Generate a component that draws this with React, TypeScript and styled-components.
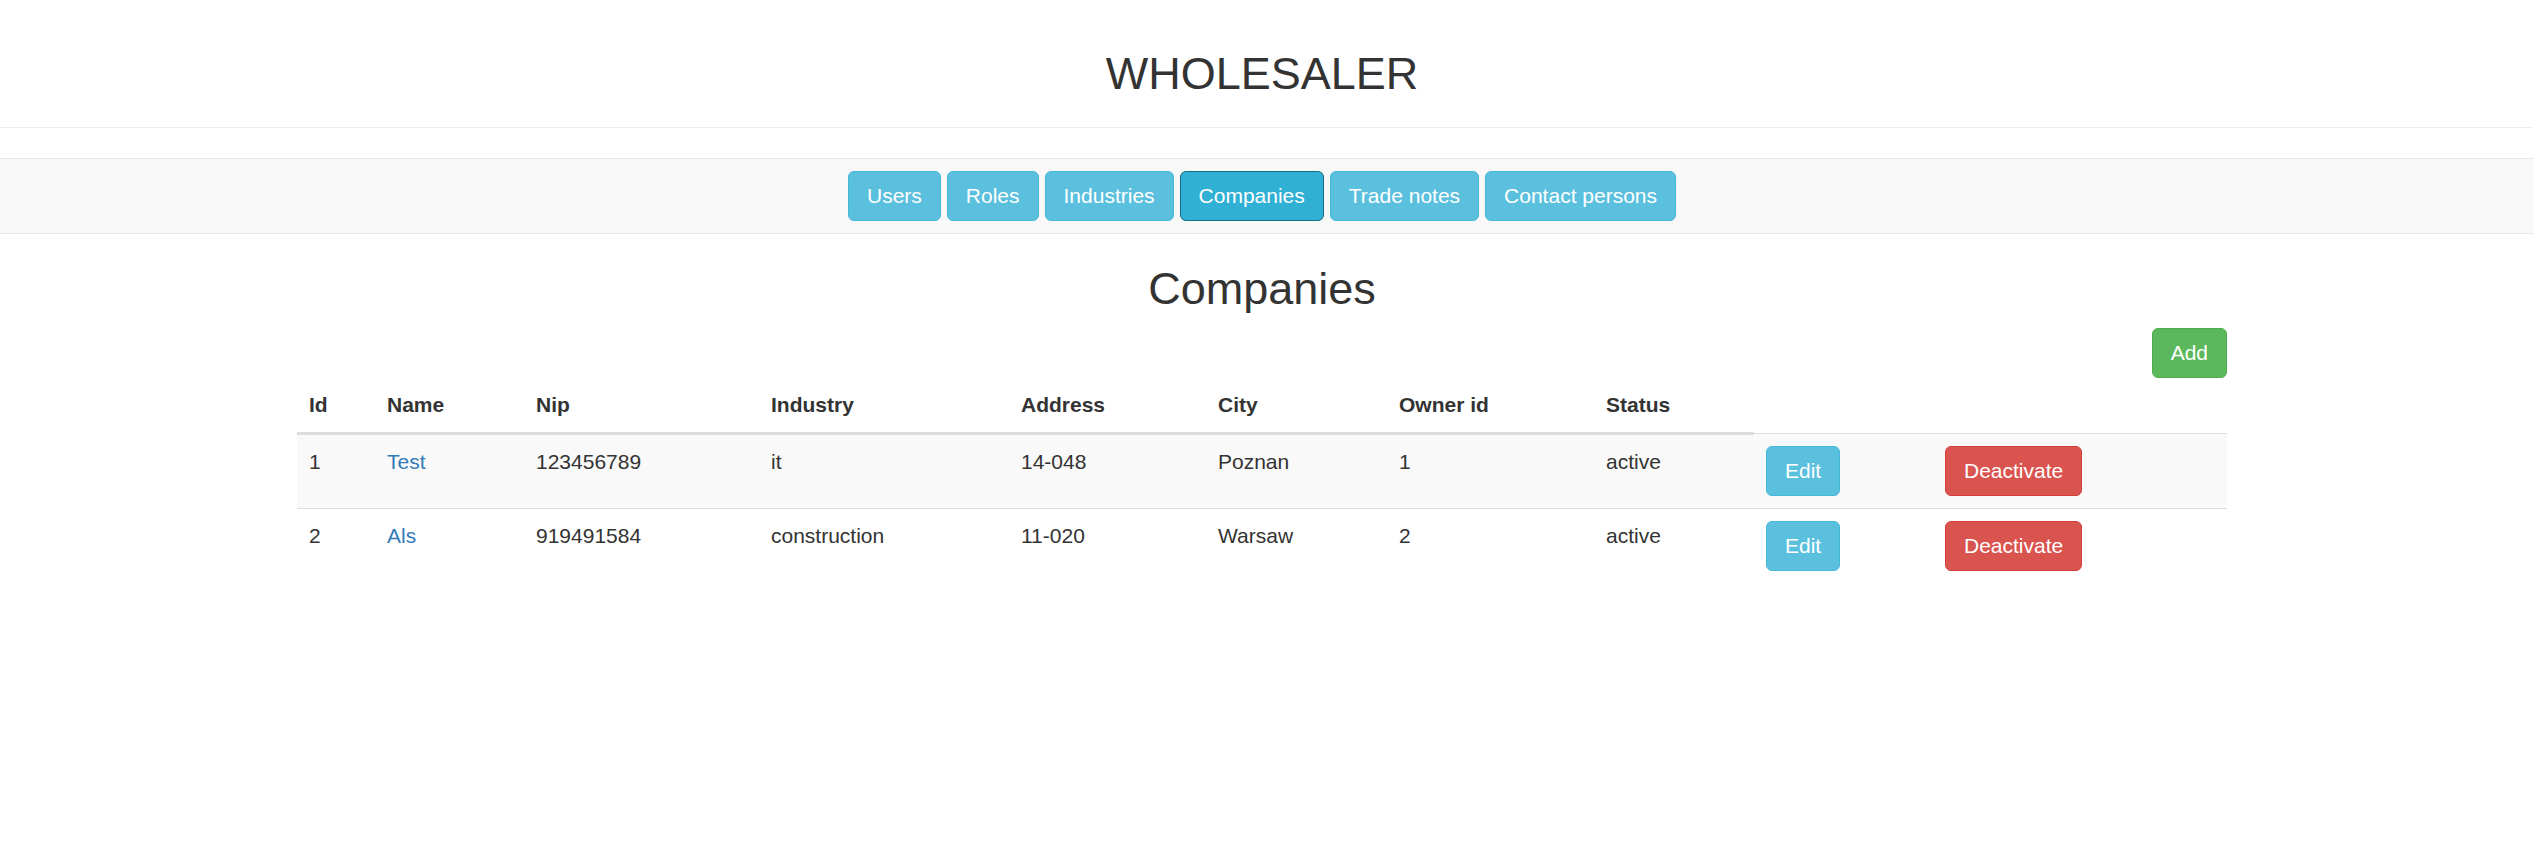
import React from "react";
import styled, { createGlobalStyle } from "styled-components";

const GlobalStyle = createGlobalStyle`
  html, body {
    margin: 0;
    padding: 0;
    background: #ffffff;
  }
  body {
    font-family: "Liberation Sans", Arial, Helvetica, sans-serif;
    font-size: 21px;
    line-height: 30px;
    color: #333333;
  }
  *, *::before, *::after {
    box-sizing: border-box;
  }
`;

const Header = styled.header`
  padding: 49px 9px 28px 0;
  border-bottom: 1px solid #eeeeee;
  text-align: center;
`;

const Title = styled.h1`
  margin: 0;
  font-size: 45px;
  line-height: 49.5px;
  font-weight: 400;
  color: #333333;
`;

const Navbar = styled.nav`
  margin-top: 30px;
  background: #f8f8f8;
  border-top: 1px solid #e7e7e7;
  border-bottom: 1px solid #e7e7e7;
  padding: 12px 9px 12px 0;
  display: flex;
  justify-content: center;
  gap: 6px;
`;

type Variant = "info" | "infoActive" | "danger" | "success";

const variants: Record<Variant, { bg: string; border: string }> = {
  info: { bg: "#5bc0de", border: "#46b8da" },
  infoActive: { bg: "#31b0d5", border: "#1b6d85" },
  danger: { bg: "#d9534f", border: "#d43f3a" },
  success: { bg: "#5cb85c", border: "#4cae4c" },
};

const Button = styled.button<{ $variant: Variant }>`
  display: inline-block;
  margin: 0;
  padding: 9px 18px;
  font-family: inherit;
  font-size: 21px;
  line-height: 30px;
  font-weight: 400;
  color: #ffffff;
  white-space: nowrap;
  border-radius: 6px;
  border: 1px solid ${(p) => variants[p.$variant].border};
  background: ${(p) => variants[p.$variant].bg};
  cursor: pointer;
`;

const Content = styled.div`
  padding-right: 9px;
`;

const Main = styled.main`
  width: 1930px;
  margin: 0 auto;
`;

const SectionTitle = styled.h2`
  margin: 30px 0 15px;
  font-size: 45px;
  line-height: 49.5px;
  font-weight: 400;
  text-align: center;
  color: #333333;
`;

const Toolbar = styled.div`
  display: flex;
  justify-content: flex-end;
`;

const Table = styled.table`
  width: 100%;
  border-collapse: collapse;
  border-spacing: 0;
  table-layout: fixed;
`;

const Th = styled.th`
  text-align: left;
  font-weight: 700;
  padding: 12px;
  line-height: 30px;
  vertical-align: bottom;
  border-bottom: 3px solid #dddddd;
`;

const Row = styled.tr<{ $striped: boolean }>`
  background: ${(p) => (p.$striped ? "#f9f9f9" : "transparent")};
`;

const Td = styled.td`
  padding: 12px;
  line-height: 30px;
  vertical-align: top;
  border-top: 1px solid #dddddd;
`;

const NameLink = styled.a`
  color: #337ab7;
  text-decoration: none;
`;

const navItems = ["Users", "Roles", "Industries", "Companies", "Trade notes", "Contact persons"];

const columns = [
  { label: "Id", width: 78 },
  { label: "Name", width: 149 },
  { label: "Nip", width: 235 },
  { label: "Industry", width: 250 },
  { label: "Address", width: 197 },
  { label: "City", width: 181 },
  { label: "Owner id", width: 207 },
  { label: "Status", width: 160 },
];

const companies = [
  { id: 1, name: "Test", nip: "123456789", industry: "it", address: "14-048", city: "Poznan", owner: 1, status: "active" },
  { id: 2, name: "Als", nip: "919491584", industry: "construction", address: "11-020", city: "Warsaw", owner: 2, status: "active" },
];

export default function App() {
  return (
    <>
      <GlobalStyle />
      <Header>
        <Title>WHOLESALER</Title>
      </Header>
      <Navbar>
        {navItems.map((item) => (
          <Button key={item} $variant={item === "Companies" ? "infoActive" : "info"}>
            {item}
          </Button>
        ))}
      </Navbar>
      <Content>
        <Main>
          <SectionTitle>Companies</SectionTitle>
          <Toolbar>
            <Button $variant="success">Add</Button>
          </Toolbar>
          <Table>
            <colgroup>
              {columns.map((c) => (
                <col key={c.label} style={{ width: c.width }} />
              ))}
              <col style={{ width: 179 }} />
              <col style={{ width: 294 }} />
            </colgroup>
            <thead>
              <tr>
                {columns.map((c) => (
                  <Th key={c.label}>{c.label}</Th>
                ))}
              </tr>
            </thead>
            <tbody>
              {companies.map((c, i) => (
                <Row key={c.id} $striped={i % 2 === 0}>
                  <Td>{c.id}</Td>
                  <Td>
                    <NameLink href="#">{c.name}</NameLink>
                  </Td>
                  <Td>{c.nip}</Td>
                  <Td>{c.industry}</Td>
                  <Td>{c.address}</Td>
                  <Td>{c.city}</Td>
                  <Td>{c.owner}</Td>
                  <Td>{c.status}</Td>
                  <Td>
                    <Button $variant="info">Edit</Button>
                  </Td>
                  <Td>
                    <Button $variant="danger">Deactivate</Button>
                  </Td>
                </Row>
              ))}
            </tbody>
          </Table>
        </Main>
      </Content>
    </>
  );
}
